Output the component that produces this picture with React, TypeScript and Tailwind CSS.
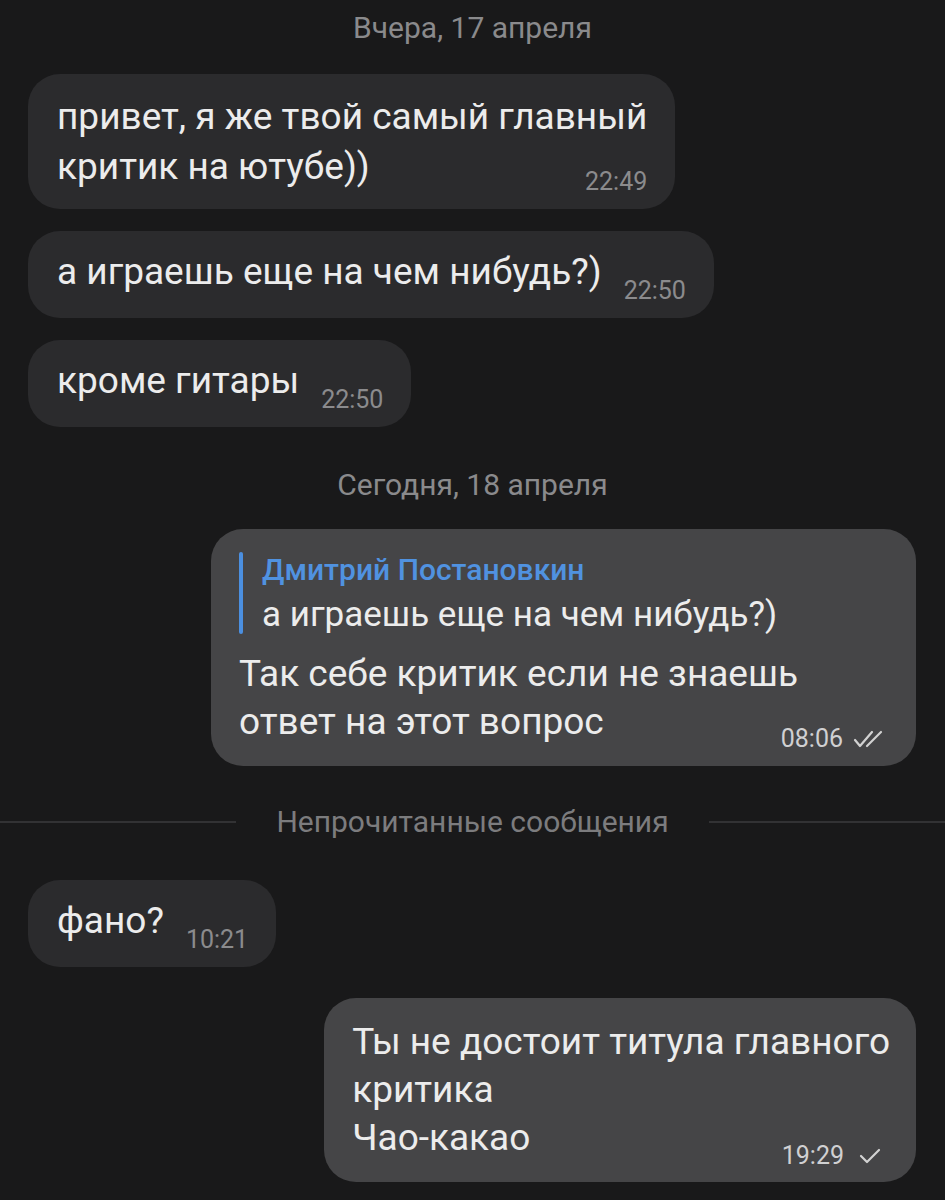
import React from "react";

const font = { fontFamily: "Roboto, 'Noto Sans', sans-serif" };

function DoubleCheck() {
  return (
    <svg width="32" height="18" viewBox="0 0 32 18" fill="none" stroke="#d2d2d2" strokeWidth="2.2" strokeLinecap="round" strokeLinejoin="round">
      <path d="M2 10 L7 16 L19 2" />
      <path d="M14 16 L28 2" />
    </svg>
  );
}

function SingleCheck() {
  return (
    <svg width="24" height="18" viewBox="0 0 24 18" fill="none" stroke="#d2d2d2" strokeWidth="2.2" strokeLinecap="round" strokeLinejoin="round">
      <path d="M3 9 L9 15 L21 3" />
    </svg>
  );
}

function DateLabel({ text }: { text: string }) {
  return (
    <div className="flex justify-center text-[30px] leading-[32px] text-[#8a8a8c]">{text}</div>
  );
}

export default function App() {
  return (
    <div className="w-[945px] h-[1200px] overflow-hidden bg-[#19191a] text-[#ececec]" style={font}>
      <div className="pt-[12px]">
        <DateLabel text="Вчера, 17 апреля" />
      </div>

      <div className="flex flex-col items-start pl-[28px] pr-[29px] mt-[30px] gap-[22px]">
        {/* bubble 1 */}
        <div className="rounded-[32px] bg-[#2b2b2d] pl-[29px] pr-[28px] pt-[18px] pb-[17px] text-[37px] leading-[50px]">
          <div className="whitespace-nowrap">привет, я же твой самый главный</div>
          <div className="flex items-end justify-between">
            <span className="whitespace-nowrap">критик на ютубе))</span>
            <span className="ml-[20px] mb-[-4px] text-[25px] leading-[28px] text-[#8b8b8d] whitespace-nowrap">22:49</span>
          </div>
        </div>
        {/* bubble 2 */}
        <div className="flex items-end rounded-[32px] bg-[#2b2b2d] pl-[29px] pr-[28px] pt-[17px] pb-[22px] text-[37px] leading-[48px]">
          <span className="whitespace-nowrap">а играешь еще на чем нибудь?)</span>
          <span className="ml-[22px] mb-[-9px] text-[25px] leading-[28px] text-[#8b8b8d] whitespace-nowrap">22:50</span>
        </div>
        {/* bubble 3 */}
        <div className="flex items-end rounded-[32px] bg-[#2b2b2d] pl-[29px] pr-[28px] pt-[17px] pb-[22px] text-[37px] leading-[48px]">
          <span className="whitespace-nowrap">кроме гитары</span>
          <span className="ml-[22px] mb-[-9px] text-[25px] leading-[28px] text-[#8b8b8d] whitespace-nowrap">22:50</span>
        </div>
      </div>

      <div className="mt-[42px]">
        <DateLabel text="Сегодня, 18 апреля" />
      </div>

      <div className="flex justify-end pl-[28px] pr-[29px] mt-[28px]">
        <div className="w-[705px] rounded-[32px] bg-[#454547] pl-[28px] pr-[31px] pt-[22px] pb-[20px] text-[37px] leading-[48px]">
          <div className="flex gap-[19px]">
            <div className="w-[4px] rounded-full bg-[#4b8fe0] mt-[1px] mb-[7px]" />
            <div className="flex flex-col">
              <span className="text-[30px] leading-[38px] font-medium text-[#5092e0] whitespace-nowrap">Дмитрий Постановкин</span>
              <span className="text-[35px] leading-[52px] whitespace-nowrap">а играешь еще на чем нибудь?)</span>
            </div>
          </div>
          <div className="mt-[9px] whitespace-nowrap">Так себе критик если не знаешь</div>
          <div className="flex items-end justify-between">
            <span className="whitespace-nowrap">ответ на этот вопрос</span>
            <span className="flex items-center gap-[10px] mb-[-7px] text-[25px] leading-[28px] text-[#d0d0d2]">
              08:06
              <DoubleCheck />
            </span>
          </div>
        </div>
      </div>

      <div className="flex items-center mt-[40px]">
        <div className="flex-1 h-[2px] bg-[#323234]" />
        <span className="px-[40px] text-[30px] leading-[32px] text-[#7c7c7e] whitespace-nowrap">Непрочитанные сообщения</span>
        <div className="flex-1 h-[2px] bg-[#323234]" />
      </div>

      <div className="flex flex-col items-start pl-[28px] pr-[29px] mt-[42px]">
        <div className="flex items-end rounded-[32px] bg-[#2b2b2d] pl-[29px] pr-[28px] pt-[17px] pb-[22px] text-[37px] leading-[48px]">
          <span className="whitespace-nowrap">фано?</span>
          <span className="ml-[22px] mb-[-9px] text-[25px] leading-[28px] text-[#8b8b8d] whitespace-nowrap">10:21</span>
        </div>
      </div>

      <div className="flex justify-end pl-[28px] pr-[29px] mt-[31px]">
        <div className="rounded-[32px] bg-[#454547] pl-[28px] pr-[26px] pt-[20px] pb-[20px] text-[37px] leading-[48px]">
          <div className="whitespace-nowrap">Ты не достоит титула главного</div>
          <div className="whitespace-nowrap">критика</div>
          <div className="flex items-end justify-between">
            <span className="whitespace-nowrap">Чао-какао</span>
            <span className="flex items-center gap-[14px] mb-[-8px] mr-[8px] text-[25px] leading-[28px] text-[#d0d0d2]">
              19:29
              <SingleCheck />
            </span>
          </div>
        </div>
      </div>
    </div>
  );
}
